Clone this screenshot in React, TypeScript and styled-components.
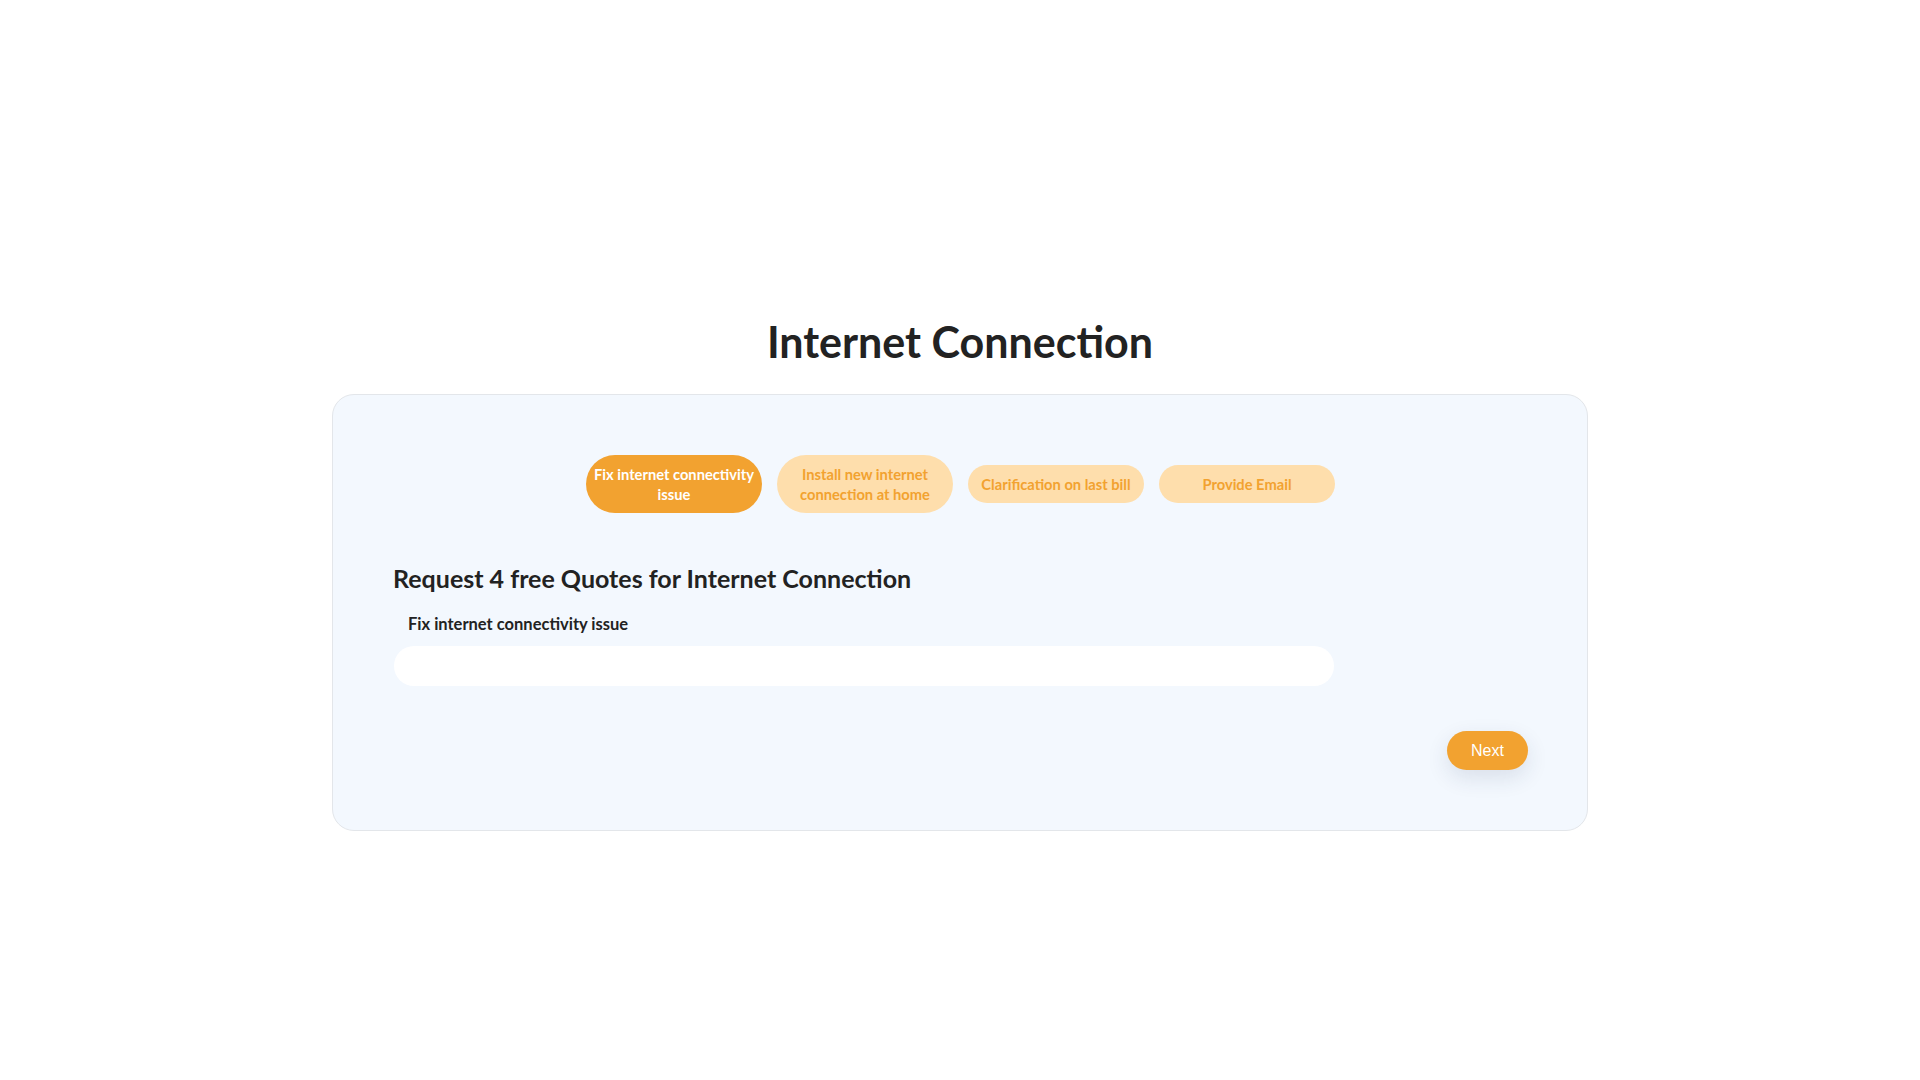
import React, { useState } from "react";
import styled, { createGlobalStyle } from "styled-components";

const GlobalStyle = createGlobalStyle`
  html, body { margin: 0; padding: 0; background: #ffffff; }
  body { font-family: "Lato", "Noto Sans", sans-serif; color: #222222; }
  * { box-sizing: border-box; }
`;

const Page = styled.main`
  width: 1256px;
  margin: 0 auto;
  padding-top: 312px;
`;

const Title = styled.h1`
  margin: 0 0 22px;
  text-align: center;
  font-size: 43px;
  line-height: 60px;
  font-weight: 700;
  color: #222222;
`;

const Card = styled.section`
  background: #f3f8fe;
  border: 1px solid #e3e6ea;
  border-radius: 22px;
  padding: 60px 59px 60px 60px;
  min-height: 437px;
  display: flex;
  flex-direction: column;
`;

const Steps = styled.div`
  display: flex;
  justify-content: center;
  align-items: center;
  gap: 15px;
`;

const Step = styled.button<{ $active?: boolean }>`
  width: 176px;
  padding: 9px 6px;
  border: none;
  border-radius: 30px;
  font-family: "Lato", "Noto Sans", sans-serif;
  font-size: 14.7px;
  line-height: 20px;
  font-weight: 700;
  cursor: pointer;
  background: ${(p) => (p.$active ? "#f2a230" : "#fedeac")};
  color: ${(p) => (p.$active ? "#ffffff" : "#f2a230")};
`;

const Heading = styled.h2`
  margin: 51px 0 0 0;
  font-size: 25px;
  line-height: 29px;
  font-weight: 700;
  color: #222222;
`;

const Label = styled.label`
  display: block;
  margin: 21px 0 0 15px;
  font-size: 16.5px;
  line-height: 20px;
  font-weight: 700;
  color: #222222;
`;

const Input = styled.input`
  display: block;
  margin: 12px 0 0 1px;
  width: 940px;
  height: 40px;
  border: none;
  border-radius: 20px;
  background: #ffffff;
  outline: none;
  padding: 0 16px;
  font-size: 16px;
`;

const Footer = styled.div`
  display: flex;
  justify-content: flex-end;
  margin-top: 45px;
`;

const NextButton = styled.button`
  width: 81px;
  height: 39px;
  border: none;
  border-radius: 20px;
  background: #f2a230;
  color: #ffffff;
  font-family: "Liberation Sans", Arial, sans-serif;
  font-size: 16px;
  cursor: pointer;
  box-shadow: 0 8px 22px rgba(30, 50, 90, 0.12);
`;

const steps = [
  "Fix internet connectivity issue",
  "Install new internet connection at home",
  "Clarification on last bill",
  "Provide Email",
];

export default function App() {
  const [active, setActive] = useState(0);
  return (
    <>
      <GlobalStyle />
      <Page>
        <Title>Internet Connection</Title>
        <Card>
          <Steps>
            {steps.map((s, i) => (
              <Step key={s} $active={i === active} onClick={() => setActive(i)}>
                {s}
              </Step>
            ))}
          </Steps>
          <Heading>Request 4 free Quotes for Internet Connection</Heading>
          <Label htmlFor="q1">{steps[active]}</Label>
          <Input id="q1" type="text" />
          <Footer>
            <NextButton type="button">Next</NextButton>
          </Footer>
        </Card>
      </Page>
    </>
  );
}
